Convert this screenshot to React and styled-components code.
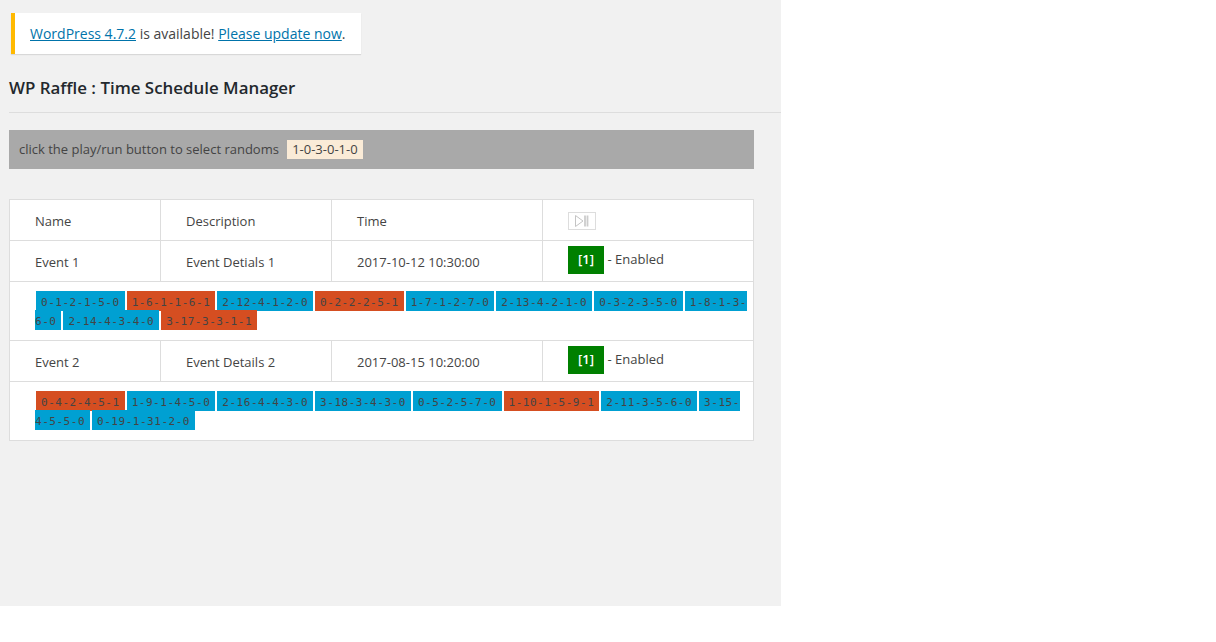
import React from "react";
import styled, { createGlobalStyle } from "styled-components";

const GlobalStyle = createGlobalStyle`
  *, *::before, *::after { box-sizing: border-box; }
  body {
    margin: 0;
    background: #fff;
    color: #444;
    font: 13px/19.5px "Open Sans", "Noto Sans", sans-serif;
  }
`;

const Page = styled.main`
  width: 781px;
  height: 606px;
  padding: 13px 0 0 9px;
  background: #f1f1f1;
`;

const Notice = styled.div`
  width: 350px;
  height: 41px;
  margin-left: 2px;
  padding: 0 15px;
  border-left: 4px solid #ffb900;
  background: #fff;
  box-shadow: 0 1px 1px rgba(0, 0, 0, 0.1);
  font-size: 14px;
  line-height: 41px;
  white-space: nowrap;
`;

const Link = styled.a`
  color: #0073aa;
  text-decoration: underline;
`;

const Title = styled.h1`
  height: 59px;
  margin: 0;
  padding-top: 22px;
  border-bottom: 1px solid #ddd;
  color: #23282d;
  font-size: 16.9px;
  font-weight: 600;
  line-height: 24px;
  white-space: nowrap;
`;

const Hint = styled.div`
  display: flex;
  align-items: center;
  gap: 8px;
  width: 745px;
  height: 39px;
  margin: 17px 0 30px;
  padding: 0 10px;
  background: #a9a9a9;
`;

const Pick = styled.span`
  width: 76px;
  height: 19px;
  text-align: center;
  background: #faebd7;
`;

const Table = styled.div`
  width: 745px;
  border: 1px solid #ddd;
  border-bottom: 0;
  background: #fff;
`;

const Row = styled.div`
  display: grid;
  grid-template-columns: 151px 171px 211px 210px;
  height: 41px;
  border-bottom: 1px solid #ddd;
`;

const Cell = styled.div`
  display: flex;
  align-items: center;
  padding: ${(p) => (p.$raised ? "1px" : "3px")} 0 0 25px;
  white-space: nowrap;
  & + & { border-left: 1px solid #ddd; }
  &:not(:first-child) { margin-left: -1px; }
`;

const StatusCell = styled(Cell)`
  padding: 0 0 2px 25px;
  gap: 3.5px;
`;

const Status = styled.span`
  width: 36px;
  height: 28px;
  background: #008000;
  color: #fff;
  font-weight: 600;
  line-height: 27px;
  text-align: center;
`;

const RunButton = styled.button`
  display: flex;
  align-items: center;
  justify-content: center;
  width: 28px;
  height: 18px;
  padding: 0;
  border: 1px solid #ddd;
  background: #fff;
`;

const Codes = styled.div`
  height: 59px;
  padding: 10px 5px 0 25px;
  border-bottom: 1px solid #ddd;
  line-height: 19px;
`;

const Code = styled.code`
  margin: 0 1px;
  padding: 5px 5px 2px;
  background: ${(p) => (p.$picked ? "#d54e21" : "#00a0d2")};
  font: 11px "DejaVu Sans Mono", monospace;
  letter-spacing: 0.526px;
`;

const events = [
  {
    name: "Event 1",
    description: "Event Detials 1",
    time: "2017-10-12 10:30:00",
    codes: ["0-1-2-1-5-0", "1-6-1-1-6-1", "2-12-4-1-2-0", "0-2-2-2-5-1", "1-7-1-2-7-0", "2-13-4-2-1-0", "0-3-2-3-5-0", "1-8-1-3-6-0", "2-14-4-3-4-0", "3-17-3-3-1-1"],
  },
  {
    name: "Event 2",
    description: "Event Details 2",
    time: "2017-08-15 10:20:00",
    codes: ["0-4-2-4-5-1", "1-9-1-4-5-0", "2-16-4-4-3-0", "3-18-3-4-3-0", "0-5-2-5-7-0", "1-10-1-5-9-1", "2-11-3-5-6-0", "3-15-4-5-5-0", "0-19-1-31-2-0"],
  },
];

function PlayPauseIcon() {
  return (
    <svg width="16" height="14" viewBox="0 0 16 14" fill="none" stroke="#c4c4c4">
      <path d="M1.5 1.5v11L9 7z" />
      <path d="M11 1.5v11M13.5 1.5v11" strokeWidth="1.8" stroke="#ccc" />
    </svg>
  );
}

export default function App() {
  return (
    <>
      <GlobalStyle />
      <Page>
        <Notice>
          <Link>WordPress 4.7.2</Link> is available! <Link>Please update now</Link>.
        </Notice>
        <Title>WP Raffle : Time Schedule Manager</Title>
        <Hint>
          <span>click the play/run button to select randoms</span>
          <Pick>1-0-3-0-1-0</Pick>
        </Hint>
        <Table>
          <Row>
            <Cell>Name</Cell>
            <Cell>Description</Cell>
            <Cell>Time</Cell>
            <Cell $raised>
              <RunButton aria-label="Run"><PlayPauseIcon /></RunButton>
            </Cell>
          </Row>
          {events.map((e) => (
            <React.Fragment key={e.name}>
              <Row>
                <Cell>{e.name}</Cell>
                <Cell>{e.description}</Cell>
                <Cell>{e.time}</Cell>
                <StatusCell>
                  <Status>[1]</Status>
                  <span>- Enabled</span>
                </StatusCell>
              </Row>
              <Codes>
                {e.codes.map((c) => (
                  <Code key={c} $picked={c.endsWith("1")}>{c}</Code>
                ))}
              </Codes>
            </React.Fragment>
          ))}
        </Table>
      </Page>
    </>
  );
}
